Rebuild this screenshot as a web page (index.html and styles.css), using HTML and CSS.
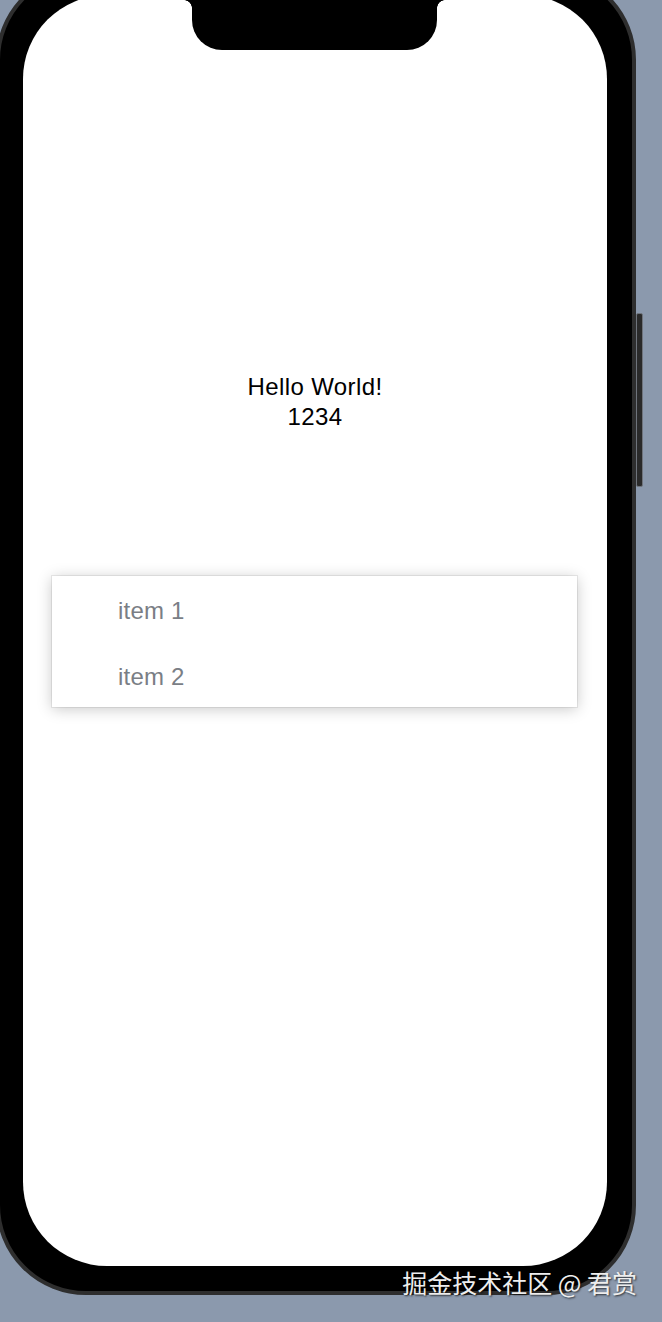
FILE: index.html
```html
<!DOCTYPE html>
<html lang="en">
<head>
    <meta charset="UTF-8">
    <meta name="viewport" content="width=device-width, initial-scale=1.0">
    <title>Hello World</title>
    <link rel="stylesheet" href="styles.css">
</head>
<body>
    <div class="phone">
        <div class="side-button"></div>
        <div class="screen">
            <div class="notch"></div>
            <div class="greeting">
                <div>Hello World!</div>
                <div>1234</div>
            </div>
            <div class="menu">
                <div class="menu-item">item 1</div>
                <div class="menu-item">item 2</div>
            </div>
        </div>
    </div>

    <!-- watermark over the bottom of the frame -->
    <div class="watermark">掘金技术社区 @ 君赏</div>
</body>
</html>
```

FILE: styles.css
```css
body {
    margin: 0;
    padding: 0;
    height: 1322px;
    background: #8b99ad;
    overflow: hidden;
    position: relative;
    font-family: 'Liberation Sans', Arial, sans-serif;
}

.phone {
    position: relative;
    box-sizing: border-box;
    width: 640px;
    height: 1325px;
    margin: -30px 0 0 -4px;
    padding: 21px 25px 25px 23px;
    background: #000;
    border: 4px solid #2e2e2e;
    border-radius: 90px;
}

.side-button {
    position: absolute;
    right: -11px;
    top: 339px;
    width: 5px;
    height: 172px;
    background: #2a2a2a;
    border: 1px solid #6f747c;
    border-radius: 2px;
}

.screen {
    position: relative;
    height: 100%;
    box-sizing: border-box;
    padding-top: 377px;
    background: #fff;
    border-radius: 84px;
    display: flex;
    flex-direction: column;
    align-items: center;
}

/* Notch */
.notch {
    position: absolute;
    top: 0;
    left: 169px;
    width: 245px;
    height: 55px;
    background: #000;
    border-radius: 0 0 30px 30px;
}

.notch::before,
.notch::after {
    content: '';
    position: absolute;
    top: 5px;
    width: 8px;
    height: 8px;
}

.notch::before {
    left: -8px;
    background: radial-gradient(circle at 0 100%, transparent 7.5px, #000 8px);
}

.notch::after {
    right: -8px;
    background: radial-gradient(circle at 100% 100%, transparent 7.5px, #000 8px);
}

.greeting {
    font-size: 24px;
    line-height: 30px;
    color: #000;
    text-align: center;
    letter-spacing: 0.4px;
}

.menu {
    align-self: stretch;
    margin: 144px 30px 0 29px;
    padding: 22px 0 17px 66px;
    background: #fff;
    display: flex;
    flex-direction: column;
    gap: 40px;
    box-shadow: 0 0 0 1px rgba(0, 0, 0, 0.07), 0 2px 14px rgba(0, 0, 0, 0.22);
}

.menu-item {
    font-size: 24px;
    line-height: 26px;
    color: #7a7e85;
    letter-spacing: 0.2px;
}

.watermark {
    position: absolute;
    right: 25px;
    top: 1268px;
    font-family: 'Noto Sans CJK SC', sans-serif;
    font-size: 25px;
    line-height: 29px;
    color: #eeeeee;
    text-shadow: 1px 1px 2px rgba(0, 0, 0, 0.7);
}
```
